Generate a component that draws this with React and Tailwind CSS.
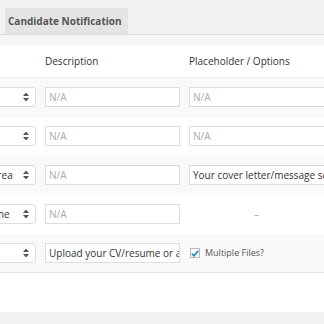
import React from "react";

function Arrows() {
  return (
    <svg width="6" height="9" viewBox="0 0 6 9" className="absolute right-[6px] top-1/2 -translate-y-1/2">
      <path d="M3 0 L6 3.5 L0 3.5 Z" fill="#555" />
      <path d="M3 9 L6 5.5 L0 5.5 Z" fill="#555" />
    </svg>
  );
}

function Select({ label }) {
  return (
    <div className="relative ml-[-38px] w-[74px] h-[20px] shrink-0 bg-white border border-[#ddd] rounded-[3px] flex items-center pl-[9px] text-[10px] text-[#333] overflow-hidden whitespace-nowrap">
      <span>{label}</span>
      <Arrows />
    </div>
  );
}

function Input({ value, placeholder, w }) {
  return (
    <div
      className={`${w} h-[20px] shrink-0 bg-white border border-[#ddd] flex items-center pl-[3px] text-[10px] overflow-hidden whitespace-nowrap`}
    >
      {value ? (
        <span className="text-[#333]">{value}</span>
      ) : (
        <span className="text-[#aaa]">{placeholder}</span>
      )}
    </div>
  );
}

export default function App() {
  const rows = [
    { sel: "Text", desc: null, ph: { placeholder: "N/A" } },
    { sel: "Text", desc: null, ph: { placeholder: "N/A" } },
    { sel: "Textarea", desc: null, ph: { value: "Your cover letter/message sent to the employer" } },
    { sel: "Resume", desc: null, dash: true },
    { sel: "File", desc: "Upload your CV/resume or any other relevant file", check: true },
  ];
  return (
    <div
      className="w-[324px] h-[324px] overflow-hidden bg-[#f1f1f1] flex flex-col"
      style={{ fontFamily: "'Open Sans', 'Liberation Sans', sans-serif" }}
    >
      <div className="h-[34px] pt-[8px] pl-[5px] flex shrink-0">
        <div className="w-[123px] h-[26px] bg-[#e4e4e4] flex items-center pl-[3px] text-[10px] font-bold text-[#555] whitespace-nowrap">
          Candidate Notification
        </div>
      </div>
      <div className="h-[11px] shrink-0 bg-[#f6f6f6] border-t border-[#dcdcdc]" />
      <div className="bg-white flex flex-col shrink-0">
        <div className="h-[33px] flex items-center border-b border-[#ececec] text-[10px] text-[#333]">
          <div className="w-[45px] shrink-0" />
          <div className="w-[144px] shrink-0">Description</div>
          <div>Placeholder / Options</div>
        </div>
        {rows.map((r, i) => (
          <div
            key={i}
            className={`h-[39px] flex items-start pt-[9px] gap-[9px] ${i % 2 === 0 ? "bg-[#f9f9f9]" : "bg-white"} ${i === 4 ? "border-b border-[#e1e1e1]" : ""}`}
          >
            <Select label={r.sel} />
            {r.desc ? (
              <Input value={r.desc} w="w-[135px]" />
            ) : (
              <Input placeholder="N/A" w="w-[135px]" />
            )}
            {r.ph && <Input {...r.ph} w="w-[200px]" />}
            {r.dash && (
              <div className="w-[135px] h-[20px] flex items-center justify-center text-[10px] text-[#aaa]">–</div>
            )}
            {r.check && (
              <div className="h-[20px] flex items-center gap-[5px] pl-[1px]">
                <div className="w-[10px] h-[10px] shrink-0 bg-white border border-[#b4b9be] flex items-center justify-center">
                  <svg width="8" height="7" viewBox="0 0 8 7">
                    <path d="M0.8 3.6 L3 5.8 L7.2 0.8" stroke="#1e8cbe" strokeWidth="1.7" fill="none" />
                  </svg>
                </div>
                <span className="text-[9px] text-[#555] whitespace-nowrap">Multiple Files?</span>
              </div>
            )}
          </div>
        ))}
        <div className="h-[39px]" />
      </div>
      <div className="flex-1 bg-[#f1f1f1]" />
    </div>
  );
}
